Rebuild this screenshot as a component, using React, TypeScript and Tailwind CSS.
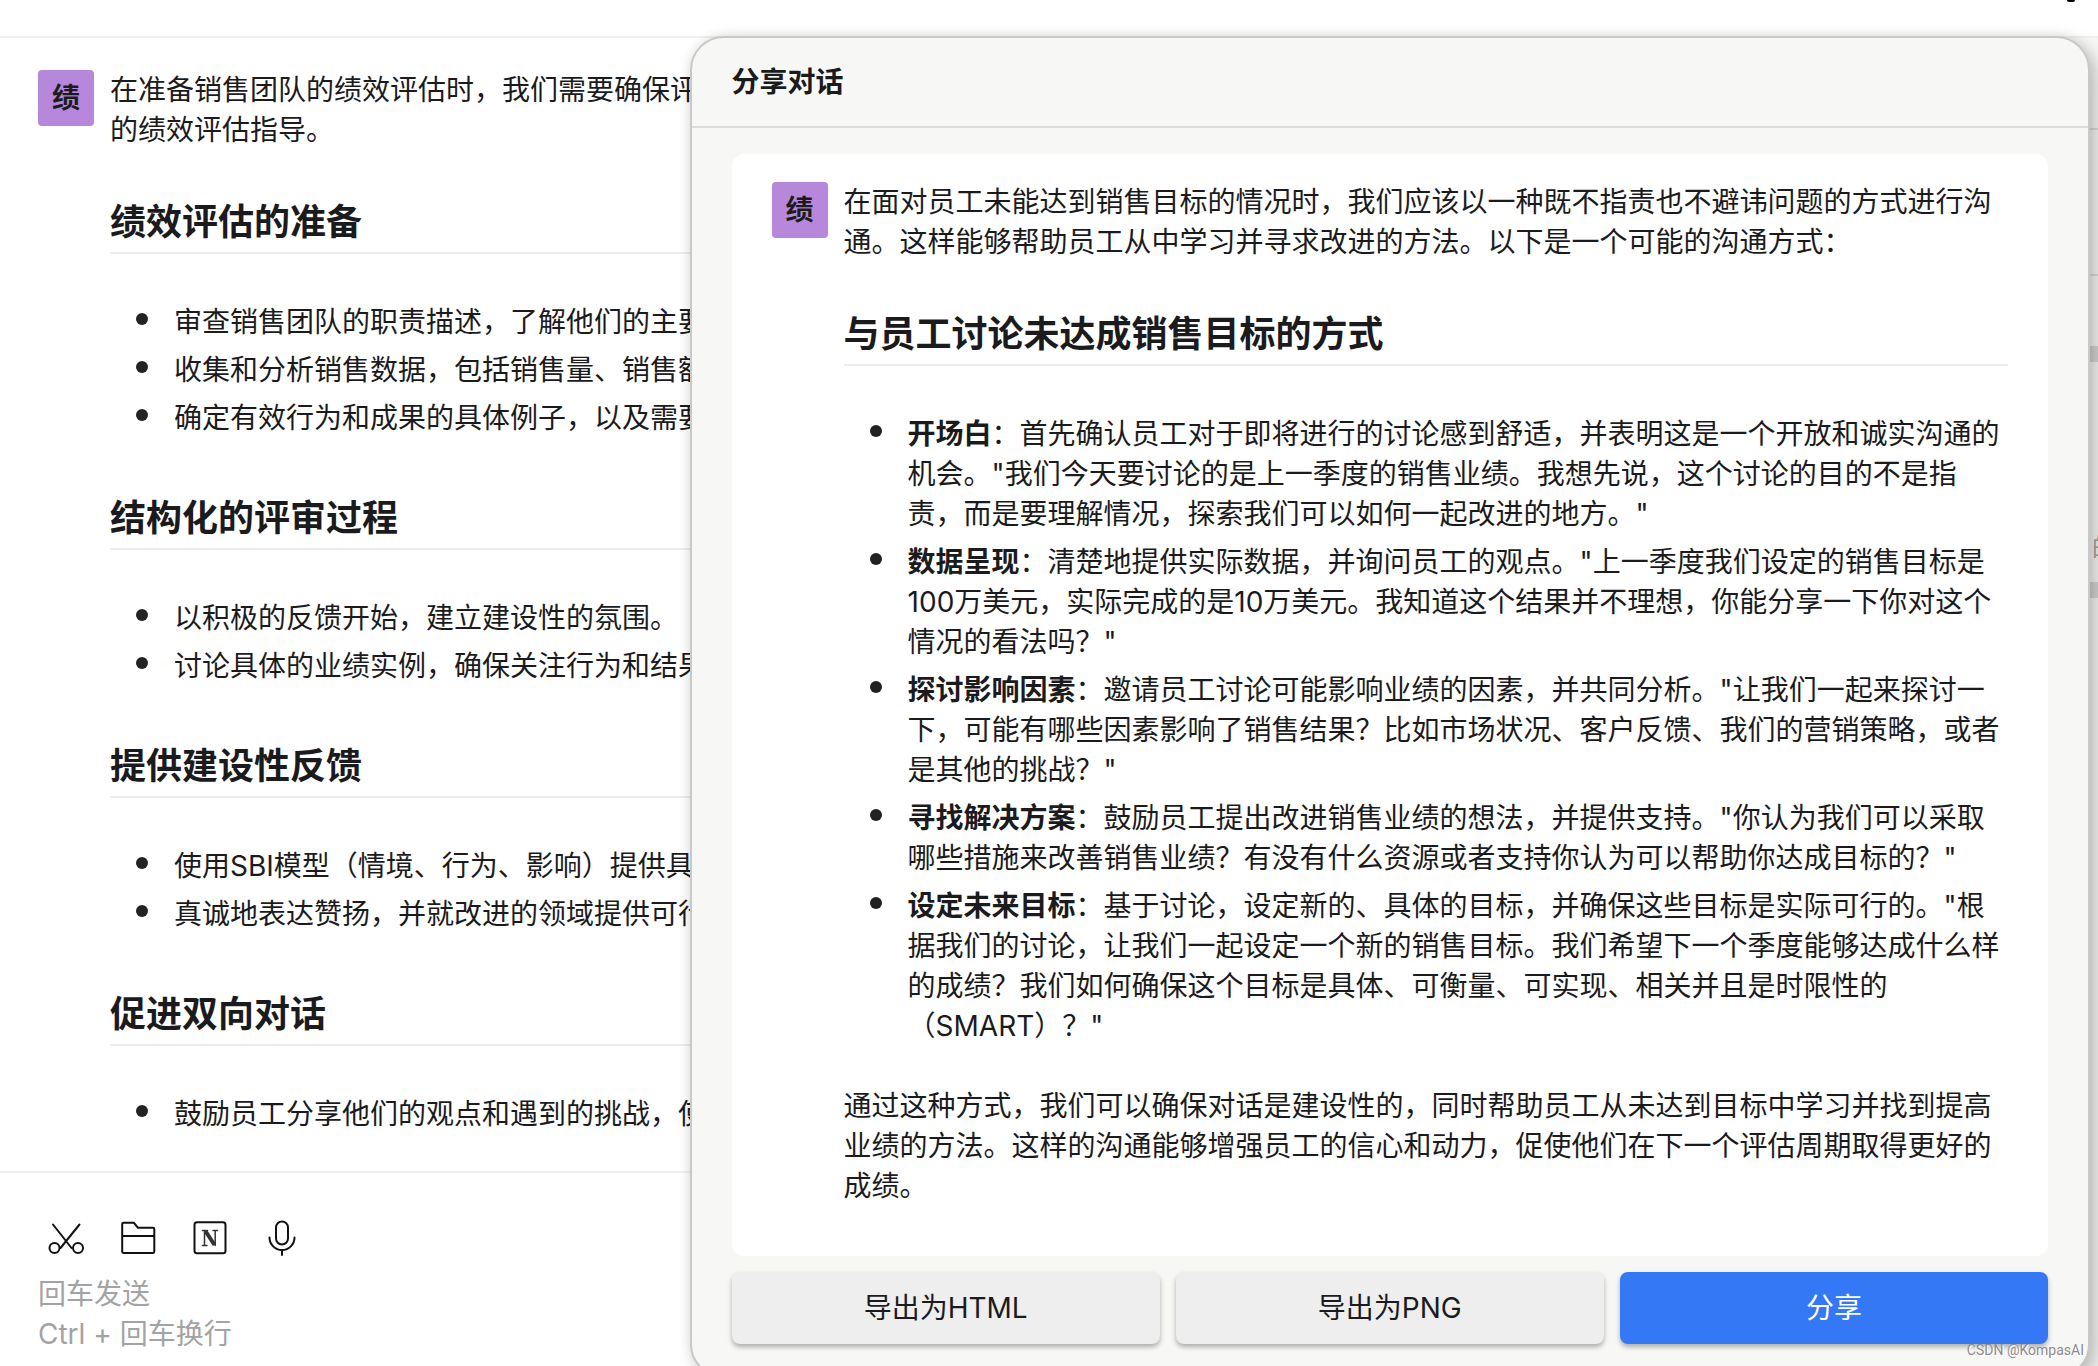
import React from 'react';

interface ListItem {
  title?: string;
  text: string;
}

interface SectionProps {
  heading: string;
  items: ListItem[];
}

const leftSections: SectionProps[] = [
  {
    heading: '绩效评估的准备',
    items: [
      { text: '审查销售团队的职责描述，了解他们的主要' },
      { text: '收集和分析销售数据，包括销售量、销售额' },
      { text: '确定有效行为和成果的具体例子，以及需要' },
    ],
  },
  {
    heading: '结构化的评审过程',
    items: [
      { text: '以积极的反馈开始，建立建设性的氛围。' },
      { text: '讨论具体的业绩实例，确保关注行为和结果' },
    ],
  },
  {
    heading: '提供建设性反馈',
    items: [
      { text: '使用SBI模型（情境、行为、影响）提供具体' },
      { text: '真诚地表达赞扬，并就改进的领域提供可行' },
    ],
  },
  {
    heading: '促进双向对话',
    items: [{ text: '鼓励员工分享他们的观点和遇到的挑战，使' }],
  },
];

const shareItems: ListItem[] = [
  {
    title: '开场白',
    text: '：首先确认员工对于即将进行的讨论感到舒适，并表明这是一个开放和诚实沟通的机会。"我们今天要讨论的是上一季度的销售业绩。我想先说，这个讨论的目的不是指责，而是要理解情况，探索我们可以如何一起改进的地方。"',
  },
  {
    title: '数据呈现',
    text: '：清楚地提供实际数据，并询问员工的观点。"上一季度我们设定的销售目标是100万美元，实际完成的是10万美元。我知道这个结果并不理想，你能分享一下你对这个情况的看法吗？"',
  },
  {
    title: '探讨影响因素',
    text: '：邀请员工讨论可能影响业绩的因素，并共同分析。"让我们一起来探讨一下，可能有哪些因素影响了销售结果？比如市场状况、客户反馈、我们的营销策略，或者是其他的挑战？"',
  },
  {
    title: '寻找解决方案',
    text: '：鼓励员工提出改进销售业绩的想法，并提供支持。"你认为我们可以采取哪些措施来改善销售业绩？有没有什么资源或者支持你认为可以帮助你达成目标的？"',
  },
  {
    title: '设定未来目标',
    text: '：基于讨论，设定新的、具体的目标，并确保这些目标是实际可行的。"根据我们的讨论，让我们一起设定一个新的销售目标。我们希望下一个季度能够达成什么样的成绩？我们如何确保这个目标是具体、可衡量、可实现、相关并且是时限性的（SMART）？"',
  },
];

function Avatar() {
  return (
    <div className="flex h-14 w-14 shrink-0 items-center justify-center rounded bg-[#b687db] font-bold">
      绩
    </div>
  );
}

function Section({ heading, items }: SectionProps) {
  return (
    <section>
      <h2 className="my-12 border-b-2 border-[#ebedef] pb-1.5 text-4xl leading-[48px] font-bold">{heading}</h2>
      <ul className="flex flex-col gap-2 pb-2 pl-[26px]">
        {items.map((item) => (
          <li key={item.text} className="flex gap-[26px]">
            <span className="mt-[11px] h-3 w-3 shrink-0 rounded-full bg-[#222222]" />
            <p>
              {item.title && <strong className="font-bold">{item.title}</strong>}
              {item.text}
            </p>
          </li>
        ))}
      </ul>
    </section>
  );
}

const iconProps = {
  width: 36,
  height: 36,
  viewBox: '0 0 36 36',
  fill: 'none',
  stroke: '#111111',
  strokeWidth: 2,
  strokeLinecap: 'round' as const,
  strokeLinejoin: 'round' as const,
};

function ScissorsIcon() {
  return (
    <svg {...iconProps}>
      <path d="M5 4.5 23.5 28M31.5 4.5 12.5 28" />
      <circle cx="6.5" cy="28" r="5" />
      <circle cx="30" cy="28" r="5" />
    </svg>
  );
}

function FolderIcon() {
  return (
    <svg {...iconProps}>
      <path d="M3.5 2.8h10.5l4 5h15q1.3 0 1.3 1.3v22.5q0 1.3-1.3 1.3h-29.500q-1.3 0-1.3-1.3v-27.500q0-1.3 1.3-1.3zM2.2 16h32" />
    </svg>
  );
}

function NotionIcon() {
  return (
    <svg {...iconProps}>
      <rect x="2.5" y="2.3" width="31" height="31" rx="2.5" />
      <path d="M10.5 10.5h5M12.5 10.5v15M10.5 25.5h4.5M21 10.5h4.5M23.2 10.5v15" stroke="#333333" strokeWidth="1.5" />
      <path d="M13.5 11 22.5 25" stroke="#333333" strokeWidth="4" strokeLinecap="butt" />
    </svg>
  );
}

function MicIcon() {
  return (
    <svg {...iconProps}>
      <rect x="12" y="1.5" width="12" height="23" rx="6" />
      <path d="M5.5 17.5a12.5 12.5 0 0 0 25 0M18 30v5" />
    </svg>
  );
}

const tools = [
  { label: '截图', icon: <ScissorsIcon /> },
  { label: '文件', icon: <FolderIcon /> },
  { label: 'Notion', icon: <NotionIcon /> },
  { label: '语音', icon: <MicIcon /> },
];

function ChatPane() {
  return (
    <main className="flex min-w-0 flex-1 flex-col">
      <div className="min-h-0 flex-1 overflow-hidden px-[38px] pt-8">
        <div className="flex gap-4">
          <Avatar />
          <div className="min-w-0 flex-1 whitespace-nowrap">
            <p>
              在准备销售团队的绩效评估时，我们需要确保评
              <br />
              的绩效评估指导。
            </p>
            {leftSections.map((section) => (
              <Section key={section.heading} {...section} />
            ))}
          </div>
        </div>
      </div>
      <div className="border-t-2 border-[#f0f0f0] px-[38px] pt-[47px]">
        <div className="flex gap-9 pl-[10px]">
          {tools.map((tool) => (
            <button key={tool.label} aria-label={tool.label} className="h-9 w-9">
              {tool.icon}
            </button>
          ))}
        </div>
        <textarea
          aria-label="消息"
          rows={2}
          placeholder={'回车发送\nCtrl + 回车换行'}
          className="mt-[18px] mb-3 block h-20 w-full resize-none outline-none placeholder:text-[#a3a3a3]"
        />
      </div>
    </main>
  );
}

function SidePane() {
  return (
    <aside className="w-10 shrink-0 overflow-hidden bg-[#f7f7f5] pl-8 text-[#a3a3a3]">
      <div className="h-[92px] border-b-2 border-[#dcdcdc]" />
      <div className="h-[146px] border-b-2 border-[#dcdcdc]" />
      <div className="mt-[70px] h-4 bg-[#d6d6d6]" />
      <div className="mt-[174px] h-6 pl-0.5 text-2xl leading-6">的</div>
      <div className="mt-[22px] h-4 bg-[#d6d6d6]" />
    </aside>
  );
}

function ShareDialog() {
  return (
    <div
      role="dialog"
      aria-labelledby="share-title"
      className="absolute top-9 right-2 w-[66.75%] rounded-[34px] border-2 border-[#c9c9c9] bg-[#f7f7f5] shadow-[0_0_12px_rgba(0,0,0,0.1),8px_8px_20px_rgba(0,0,0,0.2)]"
    >
      <header className="border-b-2 border-[#dcdcdb] px-10 py-6">
        <h1 id="share-title" className="font-bold">分享对话</h1>
      </header>
      <div className="px-10 pt-[26px] pb-8">
        <article className="flex gap-4 rounded-xl bg-white px-10 pt-7 pb-[50px]">
          <Avatar />
          <div className="min-w-0 flex-1">
            <p>
              在面对员工未能达到销售目标的情况时，我们应该以一种既不指责也不避讳问题的方式进行沟通。这样能够帮助员工从中学习并寻求改进的方法。以下是一个可能的沟通方式：
            </p>
            <Section heading="与员工讨论未达成销售目标的方式" items={shareItems} />
            <p className="mt-8">
              通过这种方式，我们可以确保对话是建设性的，同时帮助员工从未达到目标中学习并找到提高业绩的方法。这样的沟通能够增强员工的信心和动力，促使他们在下一个评估周期取得更好的成绩。
            </p>
          </div>
        </article>
        <div className="mt-4 grid grid-cols-3 gap-4">
          <button className="h-18 rounded-lg bg-[#eeeeee] shadow-[0_3px_5px_rgba(0,0,0,0.3)]">导出为HTML</button>
          <button className="h-18 rounded-lg bg-[#eeeeee] shadow-[0_3px_5px_rgba(0,0,0,0.3)]">导出为PNG</button>
          <button className="h-18 rounded-lg bg-[#3478f6] text-white shadow-[0_3px_5px_rgba(0,0,0,0.3)]">分享</button>
        </div>
      </div>
    </div>
  );
}

export default function App() {
  return (
    <div
      lang="zh-CN"
      className="relative flex h-screen flex-col overflow-hidden bg-white font-[Inter,'Noto_Sans_CJK_SC',sans-serif] text-[28px] leading-10 text-[#1b1b1d] [text-spacing-trim:space-all]"
    >
      <div className="flex h-[38px] shrink-0 justify-end border-b-2 border-[#f0f0f0] pr-[23px]">
        <span className="h-[2px] w-2 rounded-b-full bg-black" />
      </div>
      <div className="flex min-h-0 flex-1">
        <ChatPane />
        <SidePane />
      </div>
      <ShareDialog />
      <span className="absolute right-3.5 bottom-1.5 font-[Roboto,sans-serif] text-sm text-[#8c8c8c] [text-shadow:1px_1px_0_#ffffff]">CSDN @KompasAI</span>
    </div>
  );
}
